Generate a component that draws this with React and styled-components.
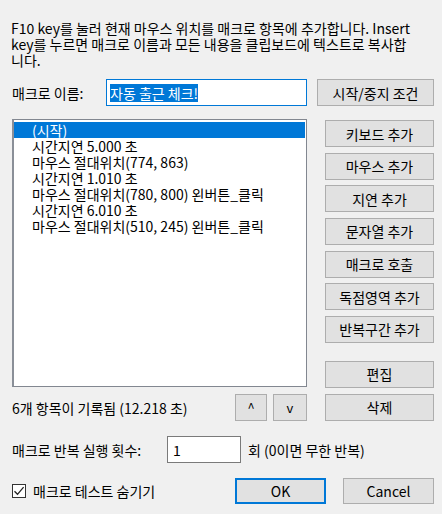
import React from 'react';
import styled, { createGlobalStyle } from 'styled-components';

const GlobalStyle = createGlobalStyle`
  html, body {
    margin: 0;
    padding: 0;
    background: #f0f0f0;
  }
  body {
    font-family: "Noto Sans CJK KR", "Liberation Sans", sans-serif;
    font-size: 14px;
    color: #000;
  }
`;

const Dialog = styled.div`
  width: 442px;
  height: 514px;
  box-sizing: border-box;
  padding: 20px 8px 0 12px;
  background: #f0f0f0;
  display: flex;
  flex-direction: column;
`;

const Desc = styled.p`
  margin: 0 0 0 -1px;
  line-height: 16px;
  white-space: nowrap;
`;

const Row = styled.div`
  display: flex;
  align-items: center;
  margin-top: ${p => p.$top || 0}px;
  height: ${p => p.$h || 27}px;
`;

const Label = styled.span`
  width: ${p => p.$w}px;
  margin-left: ${p => p.$ml || 0}px;
  flex: none;
  white-space: nowrap;
`;

const TextBox = styled.div`
  box-sizing: border-box;
  width: ${p => p.$w}px;
  height: ${p => p.$h || 27}px;
  background: #fff;
  border: 1px solid ${p => (p.$focus ? '#0078d7' : '#7a7a7a')};
  padding: 0 0 0 ${p => p.$pl || 3}px;
  display: flex;
  align-items: center;
  flex: none;
`;

const Selected = styled.span`
  background: #0078d7;
  color: #fff;
  line-height: 18px;
`;

const Button = styled.button`
  box-sizing: border-box;
  width: ${p => p.$w || 109}px;
  height: ${p => p.$h || 27}px;
  margin: 0;
  margin-left: ${p => p.$ml || 0}px;
  padding: 0;
  background: #e1e1e1;
  border: ${p => (p.$default ? '2px solid #0078d7' : '1px solid #adadad')};
  font: inherit;
  font-size: ${p => p.$fs || 14}px;
  line-height: 16px;
  color: #000;
  flex: none;
`;

const Main = styled.div`
  display: grid;
  grid-template-columns: 295px 109px;
  column-gap: 18px;
  margin-top: 13px;
`;

const LeftCol = styled.div`
  display: flex;
  flex-direction: column;
`;

const ListBox = styled.div`
  box-sizing: border-box;
  height: 268px;
  background: #fff;
  border: 1px solid #828790;
  border-left: 2px solid #8a8f98;
  padding: 2px 1px 0 0;
`;

const Item = styled.div`
  height: 16px;
  line-height: 16px;
  padding-left: 18px;
  white-space: nowrap;
  background: ${p => (p.$sel ? '#0078d7' : 'transparent')};
  color: ${p => (p.$sel ? '#fff' : '#000')};
`;

const Status = styled.div`
  display: flex;
  align-items: center;
  margin-top: 7px;
  height: 27px;
`;

const StatusText = styled.span`
  flex: 1;
  white-space: nowrap;
`;

const SideCol = styled.div`
  display: flex;
  flex-direction: column;
  padding-top: 1px;
  gap: 5.67px;
`;

const Spacer = styled.div`
  height: 6.66px;
`;

const CheckWrap = styled.label`
  display: flex;
  align-items: center;
  gap: 7px;
  width: 223px;
  flex: none;
  white-space: nowrap;
`;

const Box = styled.span`
  box-sizing: border-box;
  width: 14px;
  height: 14px;
  border: 1px solid #333;
  background: #fff;
  display: flex;
  align-items: center;
  justify-content: center;
`;

const items = [
  '(시작)',
  '시간지연 5.000 초',
  '마우스 절대위치(774, 863)',
  '시간지연 1.010 초',
  '마우스 절대위치(780, 800) 왼버튼_클릭',
  '시간지연 6.010 초',
  '마우스 절대위치(510, 245) 왼버튼_클릭',
];

const sideButtons = [
  '키보드 추가',
  '마우스 추가',
  '지연 추가',
  '문자열 추가',
  '매크로 호출',
  '독점영역 추가',
  '반복구간 추가',
];

export default function App() {
  return (
    <>
      <GlobalStyle />
      <Dialog>
        <Desc>
          F10 key를 눌러 현재 마우스 위치를 매크로 항목에 추가합니다. Insert
          <br />
          key를 누르면 매크로 이름과 모든 내용을 클립보드에 텍스트로 복사합
          <br />
          니다.
        </Desc>

        <Row $top={11}>
          <Label $w={94}>매크로 이름:</Label>
          <TextBox $w={201} $focus>
            <Selected>자동 출근 체크!</Selected>
          </TextBox>
          <Button $w={117} $ml={10}>시작/중지 조건</Button>
        </Row>

        <Main>
          <LeftCol>
            <ListBox>
              {items.map((t, i) => (
                <Item key={i} $sel={i === 0}>{t}</Item>
              ))}
            </ListBox>
            <Status>
              <StatusText>6개 항목이 기록됨 (12.218 초)</StatusText>
              <Button $w={32} $fs={13}>^</Button>
              <Button $w={34} $ml={6} $fs={13}>v</Button>
            </Status>
          </LeftCol>
          <SideCol>
            {sideButtons.map(t => (
              <Button key={t}>{t}</Button>
            ))}
            <Spacer />
            <Button>편집</Button>
            <Button>삭제</Button>
          </SideCol>
        </Main>

        <Row $top={15}>
          <Label $w={155}>매크로 반복 실행 횟수:</Label>
          <TextBox $w={74} $pl={5}>1</TextBox>
          <Label $w={180} $ml={7}>회 (0이면 무한 반복)</Label>
        </Row>

        <Row $top={15} $h={26}>
          <CheckWrap>
            <Box>
              <svg width="12" height="12" viewBox="0 0 12 12">
                <path d="M1.5 6.2 L4.5 9.3 L10.6 2.2" fill="none" stroke="#222" strokeWidth="1.3" />
              </svg>
            </Box>
            매크로 테스트 숨기기
          </CheckWrap>
          <Button $w={91} $h={26} $fs={14} $default>OK</Button>
          <Button $w={91} $h={26} $fs={14} $ml={17}>Cancel</Button>
        </Row>
      </Dialog>
    </>
  );
}
